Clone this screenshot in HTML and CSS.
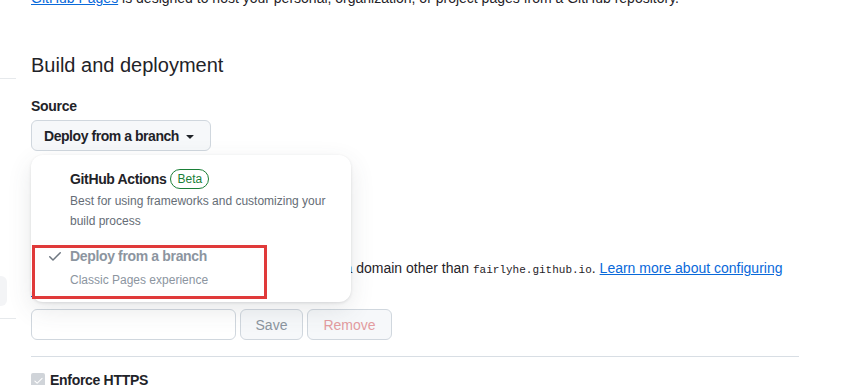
FILE: index.html
```html
<!DOCTYPE html>
<html lang="en">
<head>
    <meta charset="UTF-8">
    <title>Pages settings</title>
    <link rel="stylesheet" href="styles.css">
</head>
<body>

<div class="layout">
    <!--左侧导航（只露出一点）-->
    <div class="side">
        <div class="side_line side_line_top"></div>
        <div class="side_item"></div>
        <div class="side_line"></div>
    </div>

    <div class="main">
        <p class="intro">
            <a href="#">GitHub Pages</a> is designed to host your personal, organization, or project pages from a GitHub repository.
        </p>

        <h2 class="subhead">Build and deployment</h2>

        <div class="source">
            <label class="label">Source</label>
            <div class="menu_wrap">
                <button class="btn btn_select" type="button">
                    Deploy from a branch
                    <svg class="caret" viewBox="0 0 16 16" width="16" height="16"><path d="m4.427 7.427 3.396 3.396a.25.25 0 0 0 .354 0l3.396-3.396A.25.25 0 0 0 11.396 7H4.604a.25.25 0 0 0-.177.427Z"></path></svg>
                </button>

                <!--下拉菜单-->
                <div class="menu">
                    <div class="menu_item">
                        <span class="menu_check"></span>
                        <div class="menu_text">
                            <div class="menu_title">GitHub Actions <span class="badge">Beta</span></div>
                            <div class="menu_desc">Best for using frameworks and customizing your build process</div>
                        </div>
                    </div>
                    <div class="menu_item menu_item_selected">
                        <span class="menu_check">
                            <svg viewBox="0 0 16 16" width="16" height="16"><path d="M13.78 4.22a.75.75 0 0 1 0 1.06l-7.25 7.25a.75.75 0 0 1-1.06 0L2.22 9.28a.751.751 0 0 1 .018-1.042.751.751 0 0 1 1.042-.018L6 10.94l6.72-6.72a.75.75 0 0 1 1.06 0Z"></path></svg>
                        </span>
                        <div class="menu_text">
                            <div class="menu_title">Deploy from a branch</div>
                            <div class="menu_desc">Classic Pages experience</div>
                        </div>
                        <!--红框标注-->
                        <div class="mark"></div>
                    </div>
                </div>
            </div>
        </div>

        <div class="domain">
            <h3 class="domain_title">Custom domain</h3>
            <p class="domain_text">
                Custom domains allow you to serve your site from a domain other than <code>fairlyhe.github.io</code>. <a href="#">Learn more about configuring custom domains</a>.
            </p>
            <div class="domain_form">
                <input type="text" class="input">
                <button class="btn btn_save" type="button">Save</button>
                <button class="btn btn_remove" type="button">Remove</button>
            </div>
        </div>

        <div class="https">
            <span class="checkbox">
                <svg viewBox="0 0 16 16" width="11" height="11"><path d="M13.78 4.22a.75.75 0 0 1 0 1.06l-7.25 7.25a.75.75 0 0 1-1.06 0L2.22 9.28a.751.751 0 0 1 .018-1.042.751.751 0 0 1 1.042-.018L6 10.94l6.72-6.72a.75.75 0 0 1 1.06 0Z"></path></svg>
            </span>
            <span class="https_label">Enforce HTTPS</span>
        </div>
    </div>
</div>

</body>
</html>
```

FILE: styles.css
```css
* {
    margin: 0;
    padding: 0;
    box-sizing: border-box;
}

body {
    font-family: "Liberation Sans", Arial, sans-serif;
    font-size: 14px;
    line-height: 20px;
    color: #1f2328;
    background-color: white;
    overflow: hidden;
}

a {
    color: #0969da;
}

.layout {
    display: flex;
    gap: 15px;
}

/*左侧导航*/
.side {
    width: 16px;
    flex-shrink: 0;
    overflow: hidden;
}

.side_line {
    height: 1px;
    background-color: #e6e9ec;
    margin-top: 12px;
}

.side_line_top {
    margin-top: 78px;
}

.side_item {
    width: 7px;
    height: 30px;
    margin-top: 197px;
    background-color: #f3f4f6;
    border-radius: 0 6px 6px 0;
}

.main {
    width: 768px;
}

.intro {
    margin-top: -12px;
    line-height: 21px;
}

.subhead {
    margin-top: 42px;
    font-size: 20px;
    font-weight: normal;
    line-height: 28px;
}

.source {
    margin-top: 17px;
}

.label {
    display: block;
    font-weight: bold;
    letter-spacing: -0.3px;
    margin-bottom: 4px;
}

.menu_wrap {
    position: relative;
}

.btn {
    font-family: inherit;
    font-size: 14px;
    height: 32px;
    padding: 0 12px;
    border: 1px solid #d0d7de;
    border-radius: 6px;
    background-color: #f6f8fa;
    color: #1f2328;
    white-space: nowrap;
}

.btn_select {
    display: flex;
    align-items: center;
    gap: 3px;
    width: 180px;
    height: 31px;
    font-weight: bold;
    letter-spacing: -0.45px;
}

.caret {
    fill: #1f2328;
}

/*下拉菜单*/
.menu {
    position: absolute;
    top: calc(100% + 4px);
    left: 0;
    width: 320px;
    padding: 8px 0 6px;
    background-color: white;
    border-radius: 12px;
    box-shadow: 0 1px 3px rgba(31, 35, 40, 0.12), 0 8px 24px rgba(66, 74, 83, 0.12);
    z-index: 10;
}

.menu_item {
    position: relative;
    display: flex;
    gap: 7px;
    padding: 6px 16px;
}

.menu_check {
    width: 16px;
    height: 20px;
    flex-shrink: 0;
    padding-top: 2px;
}

.menu_check svg {
    fill: #6e7781;
}

.menu_title {
    font-weight: bold;
    letter-spacing: -0.35px;
    display: flex;
    align-items: center;
    gap: 4px;
}

.menu_desc {
    margin-top: 2px;
    font-size: 12px;
    color: #656d76;
}

.menu_item_selected {
    padding-top: 9px;
}

.menu_item_selected .menu_desc {
    margin-top: 4px;
}

.menu_item_selected .menu_title,
.menu_item_selected .menu_desc {
    color: #8c959f;
}

.badge {
    font-size: 12px;
    font-weight: normal;
    letter-spacing: 0;
    line-height: 18px;
    padding: 0 6px;
    color: #1a7f37;
    border: 1px solid #1a7f37;
    border-radius: 10px;
}

.mark {
    position: absolute;
    left: 1px;
    top: 8px;
    width: 235px;
    height: 54px;
    border: 3px solid #e03a3a;
}

/*自定义域名*/
.domain {
    margin-top: 83px;
}

.domain_title {
    font-size: 16px;
    font-weight: normal;
    line-height: 24px;
}

.domain_text code {
    font-family: "Liberation Mono", monospace;
    font-size: 11px;
}

.domain_form {
    display: flex;
    gap: 4px;
    margin-top: 9px;
}

.input {
    width: 205px;
    height: 31px;
    border: 1px solid #d0d7de;
    border-radius: 6px;
}

.btn_save {
    width: 63px;
    height: 31px;
    color: #8c959f;
}

.btn_remove {
    width: 85px;
    height: 31px;
    color: #e39ca0;
}

.https {
    display: flex;
    align-items: center;
    gap: 5px;
    margin-top: 16px;
    padding-top: 13px;
    border-top: 1px solid #d8dee4;
}

.checkbox {
    display: flex;
    align-items: center;
    justify-content: center;
    width: 14px;
    height: 14px;
    border-radius: 2px;
    background-color: #d0d4d9;
}

.checkbox svg {
    fill: white;
}

.https_label {
    font-weight: bold;
    letter-spacing: -0.3px;
}
```
